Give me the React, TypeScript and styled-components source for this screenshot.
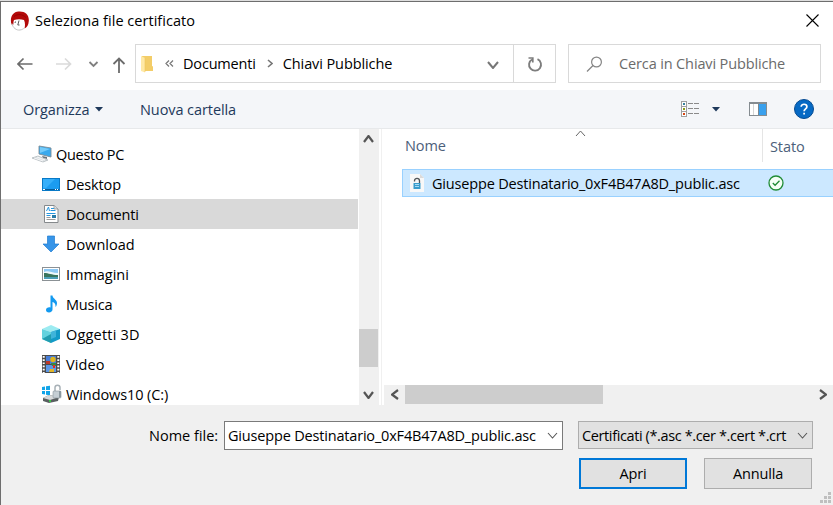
import React from "react";
import styled, { createGlobalStyle } from "styled-components";

const Global = createGlobalStyle`
  * { box-sizing: border-box; }
  html, body { margin: 0; padding: 0; overflow: hidden; }
  body { background: #f0f0f0; }
  svg { display: block; flex: none; }
`;

const Dialog = styled.div`
  width: 833px;
  height: 505px;
  display: flex;
  flex-direction: column;
  background: #fff;
  border-top: 1px solid #dedede;
  font-family: "Open Sans", "Noto Sans", sans-serif;
  font-size: 15px;
  line-height: 20px;
  color: #000;
  overflow: hidden;
`;

const Frame = styled.div`
  flex: 1;
  min-height: 0;
  display: flex;
  flex-direction: column;
  border-top: 1px solid #6e6e6e;
  border-left: 1px solid #6e6e6e;
`;

const Label = styled.span<{ $track?: number }>`
  white-space: nowrap;
  flex: none;
  font-size: 14.5px;
  letter-spacing: ${(p) => p.$track ?? -0.15}px;
`;

const TitleBar = styled.header`
  height: 42px;
  flex: none;
  display: flex;
  align-items: center;
  padding: 0 14px 5px 9px;
  gap: 5px;
`;

const Spacer = styled.div`
  flex: 1;
`;

const NavBar = styled.nav`
  height: 46px;
  flex: none;
  display: flex;
  align-items: flex-start;
  padding: 0 12px 0 16px;
`;

const NavIcons = styled.div`
  width: 118px;
  height: 39px;
  flex: none;
`;

const AddressBar = styled.div`
  width: 421px;
  height: 39px;
  flex: none;
  display: flex;
  border: 1px solid #d9d9d9;
`;

const Crumbs = styled.div`
  flex: 1;
  display: flex;
  align-items: center;
  padding-left: 4px;
`;

const Crumb = styled.div<{ $left: number }>`
  margin-left: ${(p) => p.$left}px;
  display: flex;
  padding-top: 1px;
`;

const CrumbArrow = styled.div<{ $left: number }>`
  margin-left: ${(p) => p.$left}px;
`;

const AddressDrop = styled.div`
  margin-left: auto;
  padding: 2px 14px 0 0;
`;

const Refresh = styled.div`
  width: 42px;
  display: flex;
  align-items: center;
  justify-content: center;
  border-left: 1px solid #d9d9d9;
`;

const SearchBox = styled.div`
  width: 253px;
  height: 39px;
  margin-left: 12px;
  flex: none;
  display: flex;
  align-items: center;
  gap: 16px;
  padding: 1px 0 0 17px;
  border: 1px solid #d9d9d9;
  color: #6b6b6b;
`;

const Toolbar = styled.div`
  height: 39px;
  flex: none;
  display: flex;
  align-items: center;
  padding: 0 19px 0 22px;
  background: #f4f6f9;
  border-bottom: 1px solid #e7e9eb;
  color: #1e395b;
`;

const ToolButton = styled.div<{ $w: number }>`
  width: ${(p) => p.$w}px;
  flex: none;
  display: flex;
  align-items: center;
  gap: 6px;

  & > span {
    padding-top: 2px;
  }
`;

const Body = styled.div`
  height: 276px;
  flex: none;
  display: flex;
`;

const Tree = styled.div`
  width: 357px;
  flex: none;
  overflow: hidden;
  padding-top: 10px;
`;

const TreeRow = styled.div<{ $selected?: boolean }>`
  height: 30px;
  display: flex;
  align-items: center;
  background: ${(p) => (p.$selected ? "#d9d9d9" : "transparent")};

  & > span {
    padding-top: 2px;
  }
`;

const TreeIcon = styled.div<{ $root?: boolean }>`
  width: ${(p) => (p.$root ? 55 : 65)}px;
  padding-left: ${(p) => (p.$root ? 31 : 40)}px;
  flex: none;
`;

const VScroll = styled.div`
  width: 20px;
  margin-left: 1px;
  flex: none;
  display: flex;
  flex-direction: column;
  background: #f0f0f0;
`;

const VArrow = styled.div<{ $top: number; $h: number }>`
  height: ${(p) => p.$h}px;
  padding: ${(p) => p.$top}px 0 0 4px;
`;

const VThumb = styled.div`
  width: 19px;
  height: 38px;
  margin-top: auto;
  background: #cdcdcd;
`;

const Splitter = styled.div`
  width: 5px;
  flex: none;
  border: solid #fff;
  border-width: 0 2px;
  background: #f0f0f0;
`;

const Files = styled.div`
  flex: 1;
  min-width: 0;
  display: flex;
  flex-direction: column;
`;

const ColumnHeads = styled.div`
  height: 33px;
  flex: none;
  display: flex;
  color: #4c607a;
`;

const NameHead = styled.div`
  width: 378px;
  display: grid;
  grid-template-columns: 170px 1fr;
  padding: 7px 0 0 21px;
`;

const SortMark = styled.div`
  margin-top: -6px;
`;

const StateHead = styled.div`
  flex: 1;
  border-left: 1px solid #e5e5e5;
  padding: 7px 0 0 7px;
`;

const FileRow = styled.div`
  height: 28px;
  margin: 7px 0 0 18px;
  display: flex;
  align-items: center;
  border: 1px solid #99d1ff;
  border-right: 0;
  background: #cce8ff;
  padding-left: 7px;
`;

const FileName = styled.div`
  width: 336px;
  margin-left: 8px;
  display: flex;
  padding-top: 1px;
`;

const StatusCell = styled.div`
  padding-bottom: 1px;
`;

const HScroll = styled.div`
  height: 20px;
  margin-top: auto;
  display: flex;
  align-items: flex-start;
  background: #f0f0f0;
`;

const HArrow = styled.div<{ $w: number }>`
  width: ${(p) => p.$w}px;
  height: 19px;
  display: flex;
  align-items: center;
  justify-content: center;
`;

const HThumb = styled.div`
  width: 198px;
  height: 19px;
  background: #cdcdcd;
`;

const Footer = styled.footer`
  flex: 1;
  background: #f0f0f0;
  padding: 16px 2px 0 0;
`;

const FileFields = styled.div`
  display: flex;
  align-items: flex-start;
`;

const FieldLabel = styled.div`
  width: 223px;
  height: 28px;
  display: flex;
  align-items: center;
  padding: 1px 0 0 148px;
`;

const FileInput = styled.div`
  width: 339px;
  height: 29px;
  display: flex;
  align-items: center;
  justify-content: space-between;
  padding: 0 4px 0 3px;
  border: 1px solid #7a7a7a;
  background: #fff;
`;

const TypeSelect = styled.div`
  width: 235px;
  height: 28px;
  margin-left: 15px;
  display: flex;
  align-items: center;
  justify-content: space-between;
  padding: 1px 4px 0 3px;
  border: 1px solid #adadad;
  background: #e1e1e1;
`;

const Actions = styled.div`
  display: flex;
  align-items: flex-start;
  gap: 17px;
  padding: 8px 0 0 578px;
`;

const Button = styled.button<{ $primary?: boolean }>`
  width: 108px;
  height: 31px;
  flex: none;
  padding: 0;
  border: ${(p) => (p.$primary ? "2px solid #0078d7" : "1px solid #adadad")};
  background: #e1e1e1;
  font-family: inherit;
  line-height: 20px;
  color: #000;
`;

const GripRow = styled.div`
  display: flex;
  justify-content: flex-end;
  margin-top: 3px;
`;

type ChevronProps = { dir: "up" | "down" | "left" | "right"; w: number; h: number; color: string; stroke: number };
const Chevron = ({ dir, w, h, color, stroke }: ChevronProps) => {
  const points = {
    up: `1,${h - 1} ${w / 2},1 ${w - 1},${h - 1}`,
    down: `1,1 ${w / 2},${h - 1} ${w - 1},1`,
    left: `${w - 1},1 1,${h / 2} ${w - 1},${h - 1}`,
    right: `1,1 ${w - 1},${h / 2} 1,${h - 1}`,
  }[dir];
  return (
    <svg width={w} height={h}>
      <polyline points={points} fill="none" stroke={color} strokeWidth={stroke} />
    </svg>
  );
};

const AppIcon = () => (
  <svg width="20" height="20" viewBox="0 0 20 20">
    <path d="M3 8c3-1.500 8-1.500 11 0l1.500 6c-1 3.500-3 5-6 5-4 0-7.500-4-6.500-11z" fill="#fff" />
    <path d="M1.500 13.500C-.5 7 2.500 1 8.500.6c6.500-.6 10.800 3.400 10.300 9.400-.2 4-2 6.800-4.300 7.500.8-3 .6-6-.5-8.500-3-1-7-1-10 0-.6 1.300-.7 3-.5 4.500z" fill="#b30909" />
    <path d="M2 12.500c.8 4.500 4.500 7 8 6.500 2-.3 3.300-1 4.200-2" fill="none" stroke="#c4c4c4" strokeWidth="1" />
    <path d="M9 9.500l-1.200 4.500h1.700M5.500 10.500l-.5 1.500" fill="none" stroke="#555" strokeWidth="1" />
    <path d="M4 5.500c4-3 8-2.500 12 1" fill="none" stroke="#930000" strokeWidth=".8" />
  </svg>
);

const NavArrows = () => (
  <svg width="118" height="39" fill="none">
    <path d="M15.500 20H1M6.500 14.500L1 20l5.500 5.500" stroke="#6c6c6c" strokeWidth="1.700" />
    <path d="M39 20h14.500M48 14.500l5.500 5.500-5.500 5.500" stroke="#dadada" strokeWidth="1.700" />
    <path d="M72.500 18l4 4 4-4" stroke="#808080" strokeWidth="1.800" />
    <path d="M102 29V14.500M96.500 20l5.500-5.500 5.500 5.500" stroke="#6c6c6c" strokeWidth="1.800" />
  </svg>
);

const FolderIcon = () => (
  <svg width="14" height="18" viewBox="0 0 14 18">
    <path d="M2 1h10v10l1 .5V16H2z" fill="#f3cd68" />
    <path d="M1 1l4 2v14.500L1 16z" fill="#ffe9a6" />
    <path d="M5 3v14" stroke="#eec65c" strokeWidth=".6" />
  </svg>
);

const ReloadIcon = () => (
  <svg width="16" height="18" viewBox="0 0 16 18" fill="none" stroke="#7d7d7d" strokeWidth="1.900">
    <path d="M10.500 4.200A6 6 0 1 1 5 4.500" />
    <path d="M1.500 3h4.300v4.500" strokeWidth="1.700" />
  </svg>
);

const SearchIcon = () => (
  <svg width="17" height="17" viewBox="0 0 17 17" fill="none" stroke="#858585" strokeWidth="1.200">
    <circle cx="10.500" cy="6" r="4.900" />
    <path d="M7 9.500L1 15.500" />
  </svg>
);

const ViewIcon = () => (
  <svg width="19" height="17" viewBox="0 0 19 17" shapeRendering="crispEdges">
    {[0, 5, 10].map((y, i) => (
      <g key={y}>
        <rect x="0.500" y={y + 0.5} width="5" height="5" fill="#fff" stroke="#a0a0a0" />
        <rect x="2" y={y + 2} width="2" height="2" fill={["#36829e", "#8c9d18", "#d64512"][i]} />
        <path d={`M7 ${y + 2.5}h5M13 ${y + 2.5}h5`} stroke="#8a8a8a" />
      </g>
    ))}
  </svg>
);

const Caret = () => (
  <svg width="8" height="5">
    <path d="M0 0h8L4 4.500z" fill="#1e395b" />
  </svg>
);

const PreviewIcon = () => (
  <svg width="18" height="15" viewBox="0 0 18 15">
    <rect x=".5" y=".5" width="17" height="13" fill="#fff" stroke="#858c91" />
    <rect x="0" y="0" width="18" height="2" fill="#858c91" />
    <path d="M4.500 2v11" stroke="#d5d5d5" />
    <rect x="10" y="2" width="7" height="11" fill="#39a0ed" />
    <path d="M9.500 2v11" stroke="#7a8790" />
  </svg>
);

const HelpIcon = () => (
  <svg width="20" height="20" viewBox="0 0 20 20">
    <circle cx="10" cy="10" r="9.500" fill="#0669c4" stroke="#064b91" />
    <path d="M7.200 7.700c0-3.300 5.700-3.200 5.700 0 0 2.100-2.800 2.200-2.800 4.500M10.100 13.800v1.800" fill="none" stroke="#fff" strokeWidth="1.700" />
  </svg>
);

const PcIcon = () => (
  <svg width="20" height="18" viewBox="0 0 20 18">
    <path d="M7 1l12 2v9L7 9z" fill="#39a9ed" stroke="#7e8c96" strokeWidth=".9" />
    <path d="M8 2l10 2-10 4z" fill="#74cbfa" />
    <path d="M10 11l5 1v2l-4-1z" fill="#68747c" />
    <path d="M0 13l6-2 10 4-5 2z" fill="#dce1e4" stroke="#a9b1b6" strokeWidth=".7" />
    <path d="M2 13l9 3M5 12l8 3" stroke="#fff" strokeWidth=".7" />
  </svg>
);

const DesktopIcon = () => (
  <svg width="20" height="18" viewBox="0 0 20 18">
    <rect x="1.500" y="3.500" width="17" height="12" fill="#1b9cf1" stroke="#0879c6" />
    <path d="M2 4h12L5 13H2z" fill="#36affa" />
    <path d="M2 14.500h16" stroke="#075b98" />
    <path d="M2 14.500h2M14 14.500h1M16 14.500h1" stroke="#fff" />
  </svg>
);

const DocumentIcon = () => (
  <svg width="20" height="20" viewBox="0 0 20 20">
    <path d="M3.500 1.500h10l3.500 3.500v13.500H3.500z" fill="#fff" stroke="#85898c" />
    <path d="M13 1v4h4" fill="#ddd" stroke="#85898c" strokeWidth=".7" />
    <path d="M5.500 7l2-4 1 4M10 4.500h3M9.500 6.500h5M5.500 9.500h9M5.500 11.500h4" fill="none" stroke="#2596df" />
    <path d="M5.500 13.500h4M5.500 15.500h9" stroke="#9a9a9a" />
    <rect x="11" y="11" width="4" height="3" fill="#297ca8" />
  </svg>
);

const DownloadIcon = () => (
  <svg width="20" height="20" viewBox="0 0 20 20">
    <path d="M6.500 2h7v8h4.500l-8 8-8-8h4.500z" fill="#3795e8" stroke="#207bd0" strokeWidth=".7" />
  </svg>
);

const ImagesIcon = () => (
  <svg width="20" height="18" viewBox="0 0 20 18">
    <rect x="1.500" y="2.500" width="17" height="13" fill="#fff" stroke="#8b9195" />
    <rect x="3" y="4" width="14" height="5" fill="#8bc7f4" />
    <path d="M3 7c4-2 7 1 14 1v3H3z" fill="#edf7fb" />
    <path d="M3 8c5 0 7 2 14 2v2H3z" fill="#39745d" />
    <rect x="3" y="12" width="14" height="2" fill="#4b9eb8" />
  </svg>
);

const MusicIcon = () => (
  <svg width="20" height="20" viewBox="0 0 20 20">
    <path d="M9.500 1.500h2c0 3 4.500 4 4.500 7.500 0 1.500-.5 3-1.500 4 .4-3-1.200-4.500-3-5v7.500c0 1.600-1.500 2.900-3.500 2.900-2 0-3-1-3-2.400 0-2 2.200-3 4.500-2.500z" fill="#139af0" />
  </svg>
);

const CubeIcon = () => (
  <svg width="20" height="20" viewBox="0 0 20 20">
    <path d="M1 5l9-4 9 4-9 3z" fill="#9cebf1" />
    <path d="M1 5l9 3v11l-9-4z" fill="#62d2de" />
    <path d="M19 5l-9 3v11l9-4z" fill="#139ac7" />
    <path d="M1 15l9-5v9z" fill="#219db0" />
    <path d="M10 8l5-1.700V13l-5 2z" fill="#3fb4da" />
  </svg>
);

const VideoIcon = () => (
  <svg width="20" height="20" viewBox="0 0 20 20">
    <rect x="1" y="1" width="18" height="18" fill="#4c4c4c" />
    <path d="M2.700 2v17M17.300 2v17" stroke="#fff" strokeWidth="2" strokeDasharray="1.700 1.500" />
    <rect x="5" y="2" width="10" height="8" fill="#477ed8" />
    <rect x="5" y="11" width="10" height="7" fill="#5c98e7" />
    <path d="M5 7h4v3H5z" fill="#bd3728" />
    <circle cx="12" cy="5.500" r="2.700" fill="#dfb51b" />
    <path d="M10 9h5v3h-4z" fill="#368845" />
    <path d="M9 15h4v3H8z" fill="#e2b629" />
    <path d="M12 11h2v3h-2z" fill="#e42d20" />
  </svg>
);

const DriveIcon = () => (
  <svg width="22" height="20" viewBox="0 0 22 20">
    <path d="M1 3l3-.5V6H1zM5 2.300L9 1.700V6H5zM1 7h3v3.600L1 10zM5 7h4v4.300L5 10.700z" fill="#12a4e8" />
    <path d="M2 14l6-3 10 2-1 4-9 2-6-2z" fill="#595e60" />
    <path d="M2 14l6-3 10 2-9 3z" fill="#d7d9da" />
    <path d="M8 16h2v2H8z" fill="#38c64a" />
    <path d="M14 7V3.500c0-3 5-3 5 0V6" fill="none" stroke="#a8b1b7" strokeWidth="1.500" />
    <rect x="12" y="7" width="8" height="7" rx="1" fill="#c5ced4" stroke="#89949b" strokeWidth=".6" />
    <path d="M18 7h2v6l-2 1z" fill="#8b989f" />
  </svg>
);

const CertificateIcon = () => (
  <svg width="14" height="18" viewBox="0 0 14 18">
    <path d="M0 0h10l4 4v14H0z" fill="#f8f8f8" />
    <path d="M10 0v4h4" fill="#dadada" />
    <path d="M4.500 7.500V6.800c0-3.300 5-3.300 5 0V9" fill="none" stroke="#505558" strokeWidth="1.300" />
    <rect x="3.500" y="9" width="7" height="6" fill="#399ccc" />
    <path d="M5 10.500h4M5 12.500h4" stroke="#a7dbf3" />
  </svg>
);

const StatusIcon = () => (
  <svg width="16" height="16" viewBox="0 0 16 16" fill="none" stroke="#218c35">
    <circle cx="8" cy="8" r="7" fill="#f5fff5" strokeWidth="1.300" />
    <path d="M4.800 8l2.300 2.300 4.400-4.500" strokeWidth="1.300" />
  </svg>
);

const Grip = () => (
  <svg width="11" height="11" fill="#bfbfbf">
    <path d="M8 0h3v3H8zM4 4h3v3H4zM8 4h3v3H8zM0 8h3v3H0zM4 8h3v3H4zM8 8h3v3H8z" />
  </svg>
);

const places = [
  { name: "Questo PC", icon: <PcIcon />, root: true, track: -0.3 },
  { name: "Desktop", icon: <DesktopIcon />, track: -0.15 },
  { name: "Documenti", icon: <DocumentIcon />, selected: true, track: -0.18 },
  { name: "Download", icon: <DownloadIcon />, track: 0 },
  { name: "Immagini", icon: <ImagesIcon />, track: -0.02 },
  { name: "Musica", icon: <MusicIcon />, track: -0.2 },
  { name: "Oggetti 3D", icon: <CubeIcon />, track: 0.2 },
  { name: "Video", icon: <VideoIcon />, track: 0.1 },
  { name: "Windows10 (C:)", icon: <DriveIcon />, track: -0.1 },
];

export default function App() {
  return (
    <>
      <Global />
      <Dialog>
        <Frame>
          <TitleBar>
            <AppIcon />
            <Label $track={0.03}>Seleziona file certificato</Label>
            <Spacer />
            <svg width="13" height="13" stroke="#000" strokeWidth="1.100">
              <path d="M.5.5l12 12M12.500.5l-12 12" />
            </svg>
          </TitleBar>
          <NavBar>
            <NavIcons><NavArrows /></NavIcons>
            <AddressBar>
              <Crumbs>
                <FolderIcon />
                <CrumbArrow $left={11}>
                  <svg width="9" height="7" fill="none" stroke="#777" strokeWidth="1.200">
                    <path d="M4 .5l-3 3 3 3M8 .5l-3 3 3 3" />
                  </svg>
                </CrumbArrow>
                <Crumb $left={9}><Label $track={-0.18}>Documenti</Label></Crumb>
                <CrumbArrow $left={11}><Chevron dir="right" w={6} h={9} color="#777" stroke={1.6} /></CrumbArrow>
                <Crumb $left={10}><Label $track={-0.1}>Chiavi Pubbliche</Label></Crumb>
                <AddressDrop><Chevron dir="down" w={12} h={8} color="#777" stroke={2} /></AddressDrop>
              </Crumbs>
              <Refresh><ReloadIcon /></Refresh>
            </AddressBar>
            <SearchBox>
              <SearchIcon />
              <Label $track={-0.13}>Cerca in Chiavi Pubbliche</Label>
            </SearchBox>
          </NavBar>
          <Toolbar>
            <ToolButton $w={117}><Label $track={-0.1}>Organizza</Label><Caret /></ToolButton>
            <ToolButton $w={100}><Label $track={-0.08}>Nuova cartella</Label></ToolButton>
            <Spacer />
            <ToolButton $w={31}><ViewIcon /></ToolButton>
            <ToolButton $w={37}><Caret /></ToolButton>
            <ToolButton $w={45}><PreviewIcon /></ToolButton>
            <HelpIcon />
          </Toolbar>
          <Body>
            <Tree>
              {places.map((p) => (
                <TreeRow key={p.name} $selected={p.selected}>
                  <TreeIcon $root={p.root}>{p.icon}</TreeIcon>
                  <Label $track={p.track}>{p.name}</Label>
                </TreeRow>
              ))}
            </Tree>
            <VScroll>
              <VArrow $top={6} $h={22}><Chevron dir="up" w={11} h={8} color="#555" stroke={2.2} /></VArrow>
              <VThumb />
              <VArrow $top={24} $h={38}><Chevron dir="down" w={11} h={8} color="#555" stroke={2.2} /></VArrow>
            </VScroll>
            <Splitter />
            <Files>
              <ColumnHeads>
                <NameHead>
                  <Label $track={-0.1}>Nome</Label>
                  <SortMark><Chevron dir="up" w={11} h={7} color="#666" stroke={1} /></SortMark>
                </NameHead>
                <StateHead><Label $track={-0.1}>Stato</Label></StateHead>
              </ColumnHeads>
              <FileRow>
                <CertificateIcon />
                <FileName><Label $track={-0.18}>Giuseppe Destinatario_0xF4B47A8D_public.asc</Label></FileName>
                <StatusCell><StatusIcon /></StatusCell>
              </FileRow>
              <HScroll>
                <HArrow $w={21}><Chevron dir="left" w={8} h={11} color="#555" stroke={2.2} /></HArrow>
                <HThumb />
                <Spacer />
                <HArrow $w={21}><Chevron dir="right" w={8} h={11} color="#555" stroke={2.2} /></HArrow>
              </HScroll>
            </Files>
          </Body>
          <Footer>
            <FileFields>
              <FieldLabel><Label $track={0}>Nome file:</Label></FieldLabel>
              <FileInput>
                <Label $track={-0.18}>Giuseppe Destinatario_0xF4B47A8D_public.asc</Label>
                <Chevron dir="down" w={11} h={7} color="#555" stroke={1.1} />
              </FileInput>
              <TypeSelect>
                <Label $track={-0.38}>Certificati (*.asc *.cer *.cert *.crt</Label>
                <Chevron dir="down" w={11} h={7} color="#555" stroke={1.1} />
              </TypeSelect>
            </FileFields>
            <Actions>
              <Button $primary><Label>Apri</Label></Button>
              <Button><Label>Annulla</Label></Button>
            </Actions>
            <GripRow><Grip /></GripRow>
          </Footer>
        </Frame>
      </Dialog>
    </>
  );
}
